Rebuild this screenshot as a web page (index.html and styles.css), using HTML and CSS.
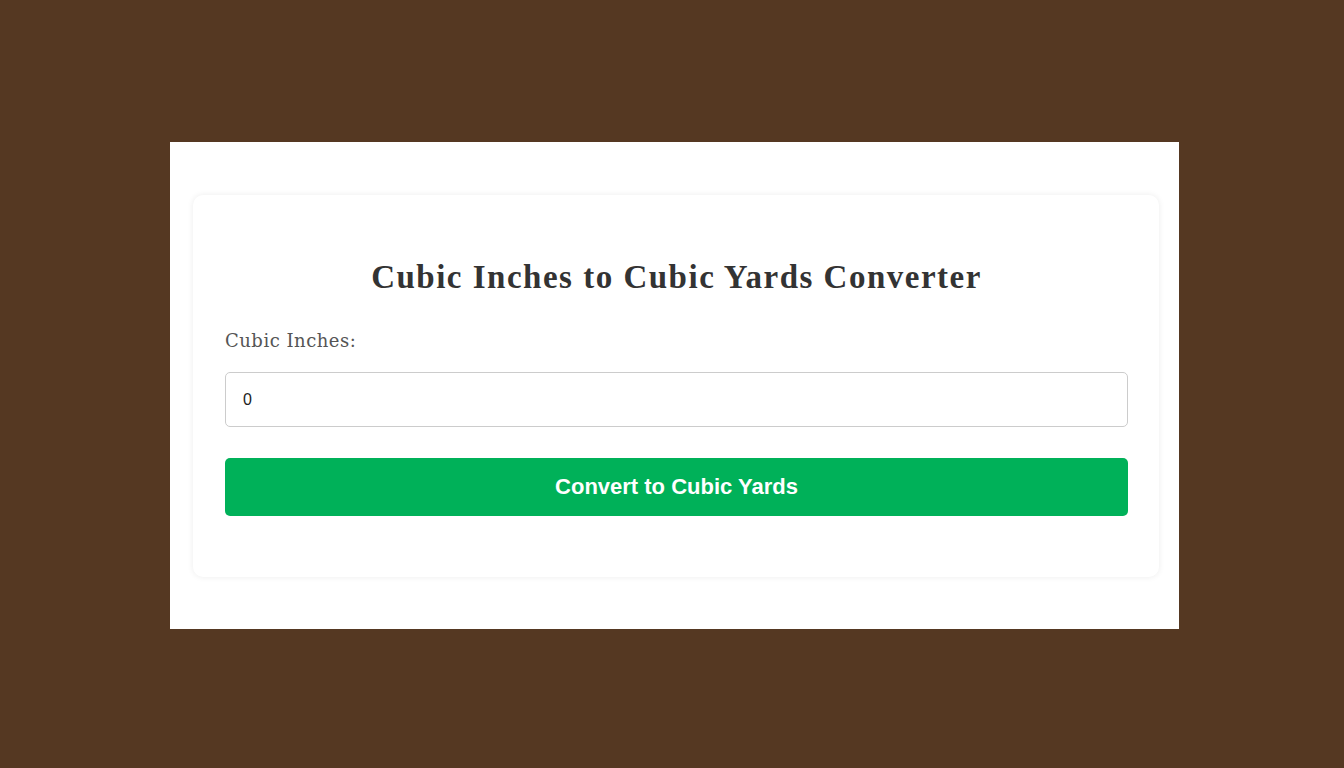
FILE: index.html
```html
<!DOCTYPE html>
<html lang="en">
  <head>
    <meta charset="UTF-8" />
    <meta name="viewport" content="width=device-width, initial-scale=1.0" />
    <title>Cubic Inches to Cubic Yards Converter</title>
    <link rel="stylesheet" href="styles.css">
  </head>
  <body>
    <div class="frame">
      <div class="converter">
        <h2>Cubic Inches to Cubic Yards Converter</h2>
        <label for="cubicInches">Cubic Inches:</label>
        <input type="number" id="cubicInches" value="0" />
        <button id="convertBtn">Convert to Cubic Yards</button>
        <p class="result"></p>
      </div>
    </div>

    <script>
      const input = document.querySelector('#cubicInches');
      const btn = document.querySelector('#convertBtn');
      const result = document.querySelector('.result');

      btn.addEventListener('click', function () {
        const inches = parseFloat(input.value);
        if (isNaN(inches)) {
          result.innerHTML = 'Please enter a valid number';
          return;
        }
        // 1 cubic yard = 46656 cubic inches
        result.innerHTML = `${(inches / 46656).toFixed(6)} cubic yards`;
      });
    </script>
  </body>
</html>
```

FILE: styles.css
```css
body {
  display: flex;
  justify-content: center;
  align-items: center;
  background-color: #553822;
  height: 100vh;
  margin: 0;
  padding: 0;
  font-family: "Liberation Serif", "Times New Roman", serif;
}

.frame {
  background-color: #ffffff;
  width: 1009px;
  height: 487px;
  box-sizing: border-box;
  padding: 53px 20px 0 23px;
  margin-left: 5px;
  margin-top: 3px;
}

.converter {
  background-color: #ffffff;
  border-radius: 10px;
  box-shadow: 0 0 6px rgba(0, 0, 0, 0.08);
  padding: 32px 31px 32px 32px;
  height: 382px;
  box-sizing: border-box;
}

h2 {
  color: #333333;
  font-size: 33px;
  line-height: 38px;
  letter-spacing: 1.5px;
  text-align: center;
  margin: 31px 0 35px;
}

label {
  display: block;
  color: #555555;
  font-family: "DejaVu Serif", "Liberation Serif", serif;
  font-size: 18px;
  line-height: 20px;
  letter-spacing: 0.5px;
  margin-bottom: 21px;
}

input[type="number"] {
  display: block;
  width: 100%;
  box-sizing: border-box;
  height: 55px;
  padding: 0 17px;
  border: 1px solid #cccccc;
  border-radius: 5px;
  font-family: "Liberation Sans", Arial, sans-serif;
  font-size: 16px;
  color: #222222;
  outline: none;
  -moz-appearance: textfield;
}

input::-webkit-outer-spin-button,
input::-webkit-inner-spin-button {
  -webkit-appearance: none;
  margin: 0;
}

button {
  display: block;
  width: 100%;
  height: 58px;
  margin-top: 31px;
  background-color: #00b159;
  color: #ffffff;
  border: none;
  border-radius: 5px;
  font-family: "Liberation Sans", Arial, sans-serif;
  font-size: 22px;
  font-weight: bold;
  cursor: pointer;
}

button:hover {
  background-color: #009a4d;
}

.result {
  margin: 0;
  color: #333333;
  font-size: 18px;
}
```
